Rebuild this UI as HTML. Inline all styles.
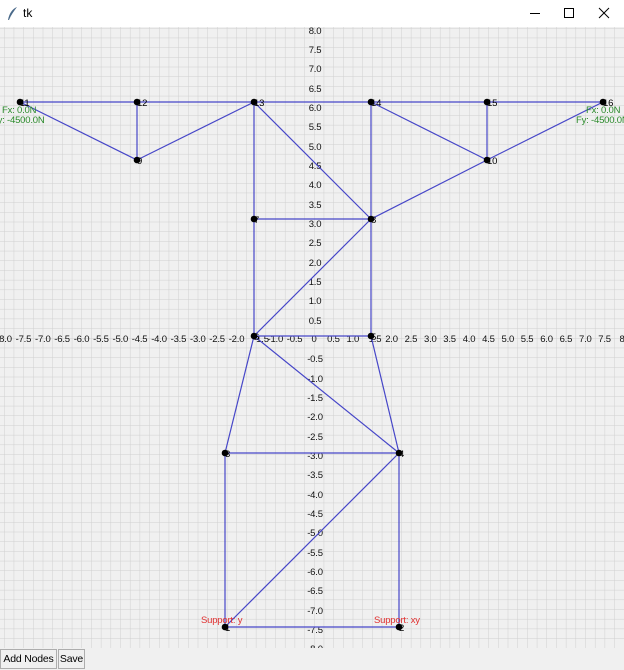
<!DOCTYPE html>
<html><head><meta charset="utf-8"><style>
html,body{margin:0;padding:0;width:624px;height:670px;overflow:hidden;background:#f0f0f0;font-family:"Liberation Sans",sans-serif}
#tb{position:absolute;left:0;top:0;width:624px;height:27px;background:#fff;border-bottom:1px solid #ddd}
#tb .t{position:absolute;left:23px;top:6px;font-size:12px;color:#000}
#cv{position:absolute;left:0;top:27px}
.btn{position:absolute;top:649px;height:20px;border:1px solid #adadad;background:#f0f0f0;font-size:10.5px;letter-spacing:-0.2px;line-height:19px;padding:0;text-align:center;box-sizing:border-box;color:#000;white-space:nowrap;overflow:hidden}
</style></head><body>
<div id="tb">
<svg width="14" height="16" style="position:absolute;left:6px;top:6px"><path d="M11 1 C6 3 3 8 2 14 L3 14 C5 9 8 5 11 1Z" fill="#4a6a8a"/></svg>
<span class="t">tk</span>
<svg width="110" height="27" style="position:absolute;left:514px;top:0">
<line x1="16" y1="13.5" x2="26" y2="13.5" stroke="#000" stroke-width="1"/>
<rect x="50.5" y="8.5" width="9" height="9" fill="none" stroke="#000"/>
<line x1="85" y1="8" x2="95" y2="18" stroke="#000"/><line x1="95" y1="8" x2="85" y2="18" stroke="#000"/>
</svg>
</div>
<svg id="cv" width="624" height="621" viewBox="0 27 624 621" font-family="Liberation Sans,sans-serif" font-size="9.5" letter-spacing="-0.2">
<defs><pattern id="g" x="314" y="338" width="9.6875" height="9.6875" patternUnits="userSpaceOnUse"><path d="M0 0H9.6875M0 0V9.6875" stroke="#cfcfcf" stroke-width="1" fill="none"/></pattern></defs>
<rect x="0" y="27" width="624" height="621" fill="#f0f0f0"/>
<rect x="0" y="27" width="624" height="621" fill="url(#g)"/>
<g fill="#111" text-anchor="middle">
<text x="4" y="342">-8.0</text><text x="23.4" y="342">-7.5</text><text x="42.8" y="342">-7.0</text><text x="62.1" y="342">-6.5</text><text x="81.5" y="342">-6.0</text><text x="100.9" y="342">-5.5</text><text x="120.3" y="342">-5.0</text><text x="139.6" y="342">-4.5</text><text x="159" y="342">-4.0</text><text x="178.4" y="342">-3.5</text><text x="197.8" y="342">-3.0</text><text x="217.1" y="342">-2.5</text><text x="236.5" y="342">-2.0</text><text x="261" y="342">-1.5</text><text x="275.3" y="342">-1.0</text><text x="294.6" y="342">-0.5</text><text x="314" y="342">0</text><text x="333.4" y="342">0.5</text><text x="352.8" y="342">1.0</text><text x="375" y="342">1.5</text><text x="391.5" y="342">2.0</text><text x="410.9" y="342">2.5</text><text x="430.3" y="342">3.0</text><text x="449.6" y="342">3.5</text><text x="469" y="342">4.0</text><text x="488.4" y="342">4.5</text><text x="507.8" y="342">5.0</text><text x="527.1" y="342">5.5</text><text x="546.5" y="342">6.0</text><text x="565.9" y="342">6.5</text><text x="585.3" y="342">7.0</text><text x="604.6" y="342">7.5</text><text x="622" y="342">8</text>
<text x="315" y="34">8.0</text><text x="315" y="53">7.5</text><text x="315" y="72">7.0</text><text x="315" y="92">6.5</text><text x="315" y="111">6.0</text><text x="315" y="130">5.5</text><text x="315" y="150">5.0</text><text x="315" y="169">4.5</text><text x="315" y="188">4.0</text><text x="315" y="208">3.5</text><text x="315" y="227">3.0</text><text x="315" y="246">2.5</text><text x="315" y="266">2.0</text><text x="315" y="285">1.5</text><text x="315" y="304">1.0</text><text x="315" y="324">0.5</text>
<text x="315" y="362">-0.5</text><text x="315" y="382">-1.0</text><text x="315" y="401">-1.5</text><text x="315" y="420">-2.0</text><text x="315" y="440">-2.5</text><text x="315" y="459">-3.0</text><text x="315" y="478">-3.5</text><text x="315" y="498">-4.0</text><text x="315" y="517">-4.5</text><text x="315" y="536">-5.0</text><text x="315" y="556">-5.5</text><text x="315" y="575">-6.0</text><text x="315" y="594">-6.5</text><text x="315" y="614">-7.0</text><text x="315" y="633">-7.5</text><text x="315" y="652">-8.0</text>
</g>
<g stroke="#4646c8" stroke-width="1.2" fill="none">
<path d="M20 102H603"/>
<path d="M20 102L137 160L254 102M137 102V160"/>
<path d="M254 102V336M254 102L371 219M254 219H371M371 102V336"/>
<path d="M371 102L487 160L603 102M487 102V160M487 160L371 219"/>
<path d="M371 219L254 336M254 336H371"/>
<path d="M254 336L225 453M371 336L399 453M254 336L399 453"/>
<path d="M225 453H399M225 453V627M399 453V627M225 627H399M225 627L399 453"/>
</g>
<g fill="#000">
<circle cx="20" cy="102" r="3.3"/><circle cx="137" cy="102" r="3.3"/><circle cx="254" cy="102" r="3.3"/><circle cx="371" cy="102" r="3.3"/><circle cx="487" cy="102" r="3.3"/><circle cx="603" cy="102" r="3.3"/>
<circle cx="137" cy="160" r="3.3"/><circle cx="487" cy="160" r="3.3"/><circle cx="254" cy="219" r="3.3"/><circle cx="371" cy="219" r="3.3"/>
<circle cx="254" cy="336" r="3.3"/><circle cx="371" cy="336" r="3.3"/><circle cx="225" cy="453" r="3.3"/><circle cx="399" cy="453" r="3.3"/><circle cx="225" cy="627" r="3.3"/><circle cx="399" cy="627" r="3.3"/>
<text x="20" y="106">11</text><text x="137" y="106">12</text><text x="254" y="106">13</text><text x="371" y="106">14</text><text x="487" y="106">15</text><text x="603" y="106">16</text>
<text x="137" y="164">9</text><text x="487" y="164">10</text><text x="254" y="223">7</text><text x="371" y="223">8</text>
<text x="254" y="340">6</text><text x="371" y="340">5</text><text x="225" y="457">3</text><text x="399" y="457">4</text><text x="225" y="631">1</text><text x="399" y="631">2</text>
</g>
<g fill="#2a8a2a">
<text x="2" y="113">Fx: 0.0N</text><text x="-8" y="123">Fy: -4500.0N</text>
<text x="586" y="113">Fx: 0.0N</text><text x="576" y="123">Fy: -4500.0N</text>
</g>
<g fill="#e03030">
<text x="201" y="623">Support: y</text><text x="374" y="623">Support: xy</text>
</g>
</svg>
<div class="btn" style="left:0;width:57px">Add Nodes</div>
<div class="btn" style="left:58px;width:27px">Save</div>
</body></html>
